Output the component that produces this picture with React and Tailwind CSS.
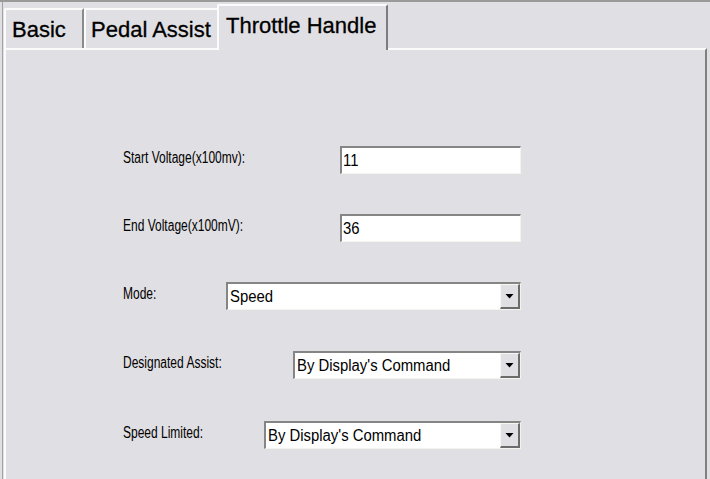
import React from 'react';

const font = { fontFamily: '"Liberation Sans", Arial, sans-serif' };

const Arrow = () => (
    <svg width="9" height="5" viewBox="0 0 9 5" className="block">
        <path d="M0.5 0 H8.5 L4.5 4.5 Z" fill="#000" />
    </svg>
);

const Label = ({ children }) => (
    <span className="inline-block origin-left scale-x-[0.75] text-[16px] leading-none text-black whitespace-nowrap -mt-[5px]">
        {children}
    </span>
);

const Value = ({ children }) => (
    <span className="inline-block origin-left scale-x-[0.93] text-[16px] text-black leading-none whitespace-nowrap">
        {children}
    </span>
);

const TextBox = ({ value }) => (
    <div className="w-[181px] h-[28px] bg-white border-t-2 border-l-2 border-[#858585] border-r border-b border-r-[#f4f4ef] border-b-[#f4f4ef] flex items-center pl-[1px]">
        <Value>{value}</Value>
    </div>
);

const Select = ({ value, width }) => (
    <div
        className={`${width} h-[28px] bg-white border-t-2 border-l-2 border-[#858585] border-r border-b border-r-[#f4f4ef] border-b-[#f4f4ef] flex items-stretch`}
    >
        <div className="flex-1 flex items-center pl-[2px]">
            <Value>{value}</Value>
        </div>
        <div className="w-[20px] bg-[#e0dfe3] border-t border-l border-[#f6f6f4] border-r-2 border-b-2 border-r-[#6b6b6b] border-b-[#6b6b6b] flex items-center justify-center">
            <Arrow />
        </div>
    </div>
);

const Row = ({ label, children, className = '' }) => (
    <div className={`ml-[117px] w-[398px] h-[28px] flex items-center justify-between ${className}`}>
        <Label>{label}</Label>
        {children}
    </div>
);

const App = () => {
    return (
        <div style={font} className="w-[710px] h-[479px] bg-[#e0dfe3] border-t-2 border-[#9a9a9a] overflow-hidden">
            <div className="ml-[2px] h-full border-l border-[#a3a3a3] pl-[1px] flex flex-col">
                {/* tab strip */}
                <div className="h-[46px] flex items-end shrink-0">
                    <div className="w-[80px] h-[40px] border-l-2 border-t-2 border-[#fbfbfb] border-r-2 border-r-[#8a8a8a] rounded-tl-[2px] pl-[6px] pt-[9px]">
                        <span className="text-[22px] leading-none text-black [-webkit-text-stroke:0.3px_#000]">Basic</span>
                    </div>
                    <div className="w-[133px] h-[40px] border-l-2 border-t-2 border-[#fbfbfb] pl-[5px] pt-[9px]">
                        <span className="text-[22px] leading-none text-black [-webkit-text-stroke:0.3px_#000]">Pedal Assist</span>
                    </div>
                    <div className="relative z-10 -mb-[2px] w-[171px] h-[46px] bg-[#e0dfe3] border-l-2 border-t-2 border-[#fbfbfb] border-r-2 border-r-[#7c7c7c] rounded-t-[2px] pl-[7px] pt-[9px]">
                        <span className="text-[22px] leading-none text-black [-webkit-text-stroke:0.3px_#000]">Throttle Handle</span>
                    </div>
                </div>

                {/* panel */}
                <div className="w-[703px] flex-1 border-t-2 border-l-2 border-[#fbfbfb] border-r-2 border-r-[#7f7f7f] pt-[96px]">
                    <Row label="Start Voltage(x100mv):">
                        <TextBox value="11" />
                    </Row>
                    <Row label="End Voltage(x100mV):" className="mt-[40px]">
                        <TextBox value="36" />
                    </Row>
                    <Row label="Mode:" className="mt-[40px]">
                        <Select value="Speed" width="w-[295px]" />
                    </Row>
                    <Row label="Designated Assist:" className="mt-[41px]">
                        <Select value="By Display's Command" width="w-[228px]" />
                    </Row>
                    <Row label="Speed Limited:" className="mt-[42px]">
                        <Select value="By Display's Command" width="w-[257px]" />
                    </Row>
                </div>
            </div>
        </div>
    );
};

export default App;
